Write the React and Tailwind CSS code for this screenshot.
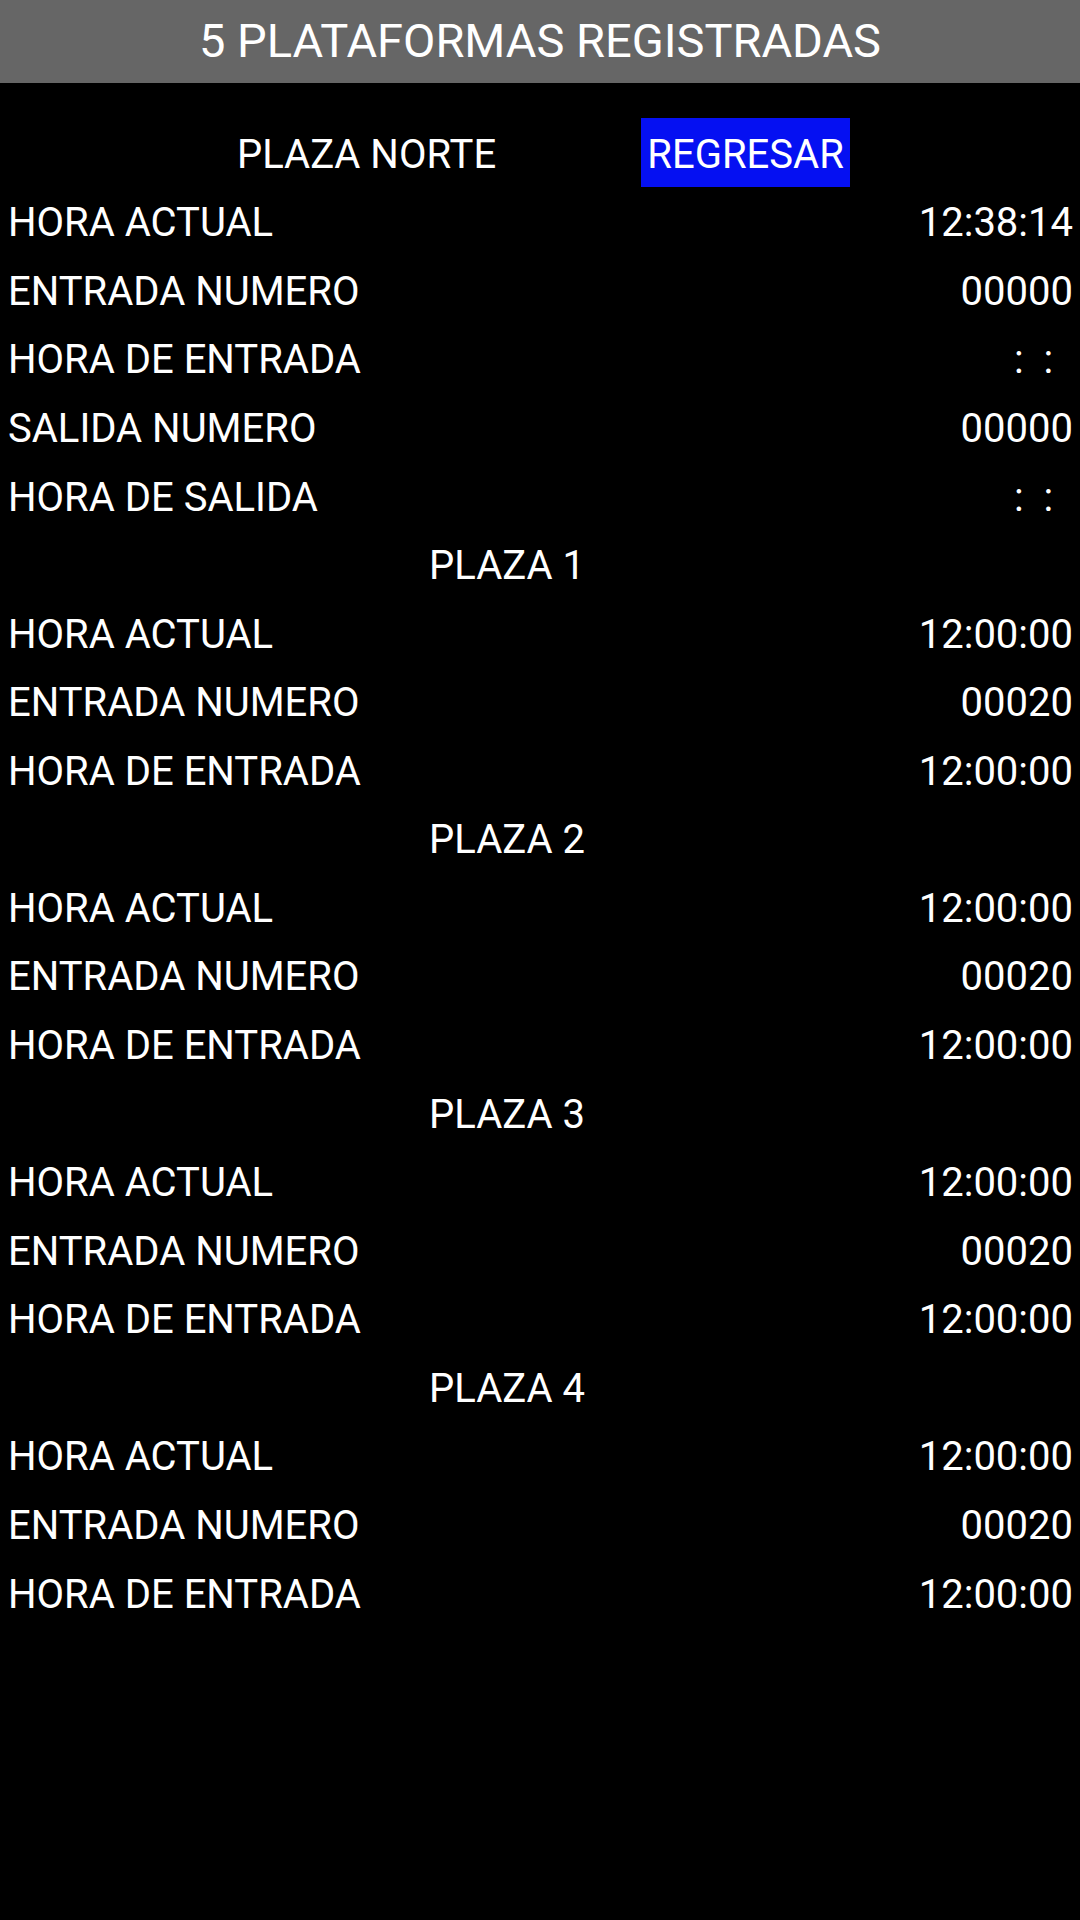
const font = { fontFamily: "Roboto, 'Liberation Sans', sans-serif" };

const plazas = [
  { name: "PLAZA 1", actual: "12:00:00", numero: "00020", entrada: "12:00:00" },
  { name: "PLAZA 2", actual: "12:00:00", numero: "00020", entrada: "12:00:00" },
  { name: "PLAZA 3", actual: "12:00:00", numero: "00020", entrada: "12:00:00" },
  { name: "PLAZA 4", actual: "12:00:00", numero: "00020", entrada: "12:00:00" },
];

function Row({ label, value }) {
  return (
    <div className="flex h-[68.57px] items-center justify-between pl-2 pr-[7px] pt-[4px]">
      <span>{label}</span>
      <span className="whitespace-pre">{value}</span>
    </div>
  );
}

function PlazaTitle({ name }) {
  return (
    <div className="flex h-[68.57px] items-center justify-center pr-[66px] pt-[4px]">
      {name}
    </div>
  );
}

export default function App() {
  return (
    <div className="min-h-[1920px] w-[1080px] bg-black text-white" style={font}>
      <div className="flex h-[83px] items-center justify-center bg-[#666666] text-[47px]">
        5 PLATAFORMAS REGISTRADAS
      </div>

      <div className="pt-[35px] text-[40px] leading-none">
        <div className="flex h-[69px] items-center justify-center gap-[145px] pl-[7px]">
          <span className="pt-[4px]">PLAZA NORTE</span>
          <button className="flex h-[69px] w-[209px] items-center justify-center bg-[#0510f2] pt-[4px] text-white">
            REGRESAR
          </button>
        </div>

        <Row label="HORA ACTUAL" value="12:38:14" />
        <Row label="ENTRADA NUMERO" value="00000" />
        <Row label="HORA DE ENTRADA" value={"  :  :  "} />
        <Row label="SALIDA NUMERO" value="00000" />
        <Row label="HORA DE SALIDA" value={"  :  :  "} />

        {plazas.map((p) => (
          <div key={p.name}>
            <PlazaTitle name={p.name} />
            <Row label="HORA ACTUAL" value={p.actual} />
            <Row label="ENTRADA NUMERO" value={p.numero} />
            <Row label="HORA DE ENTRADA" value={p.entrada} />
          </div>
        ))}
      </div>
    </div>
  );
}
